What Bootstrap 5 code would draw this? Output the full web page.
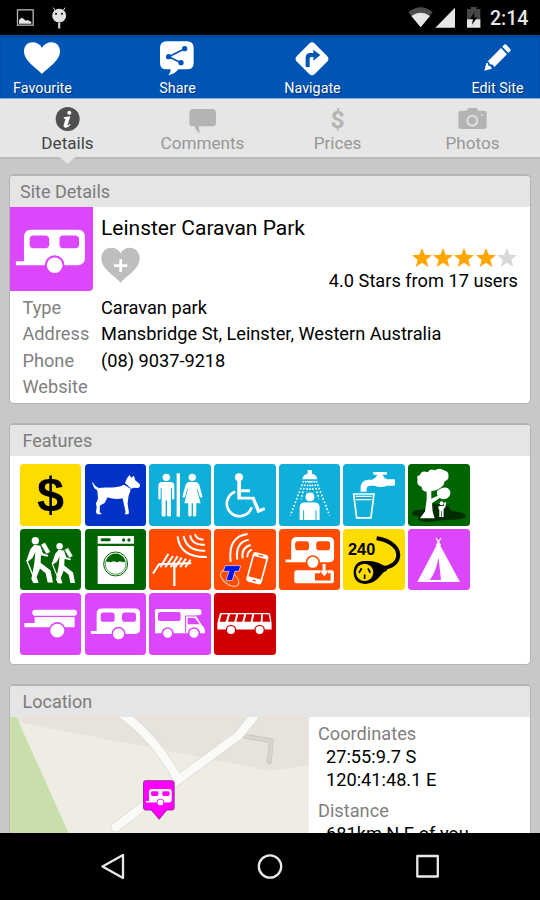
<!DOCTYPE html>
<html lang="en">
<head>
<meta charset="utf-8">
<meta name="viewport" content="width=device-width, initial-scale=1">
<title>Leinster Caravan Park</title>
<link href="https://cdn.jsdelivr.net/npm/bootstrap@5.3.0/dist/css/bootstrap.min.css" rel="stylesheet">
<style>
  body { font-family: Roboto, "Liberation Sans", sans-serif; font-size: 18.2px; line-height: 26.6px; color: #000; background: #c8c8c8; }
  svg { display: block; overflow: visible; flex: none; }
  .app-screen { width: 540px; height: 900px; }
  .status-bar { height: 35px; background: #000; }
  .clock-text { width: 55px; padding-left: 5px; font-size: 19.5px; font-weight: 500; line-height: 37px; color: #e6e6e6; }
  .action-bar { height: 64px; background: #0054b4; color: #fff; gap: 50px; border-bottom: 1px solid #8ca6d8; box-shadow: inset 0 2px 2px #00479c; }
  .action-item { width: 85px; font-size: 14.3px; line-height: 20px; text-shadow: 1px 1px 1px #00337a; }
  .tab-strip { height: 60px; background: #e6e6e6; border-bottom: 2px solid #b9b9b9; }
  .tab-item { color: #979797; font-size: 17.1px; line-height: 23px; position: relative; }
  .tab-item > svg:first-child { margin-top: -1px; }
  .tab-item.is-current { color: #444; }
  .tab-pointer { position: absolute; left: 59px; top: 58px; }
  .content-area { padding: 15px 9px 0; overflow: hidden; }
  .panel { background: #fff; border-radius: 5px; border: 1px solid #b4b4b4; border-top: 2px solid #b4b4b4; overflow: hidden; margin-bottom: 19px; }
  .panel-head { background: #e5e5e5; color: #7c7c7c; height: 31px; line-height: 31px; font-size: 18px; }
  .head-a { padding-left: 10px; }
  .head-b { padding-left: 12.5px; }
  .site-icon { width: 83px; height: 84px; background: #dc46fc; color: #dc46fc; border-bottom-right-radius: 4px; }
  .site-name { font-size: 21px; line-height: 26px; }
  .muted-label { color: #808080; }
  .label-col { width: 78.5px; }
  .star-row { color: #ffa500; padding-top: 7px; margin-bottom: 1px; }
  .field-list { padding-bottom: 2px; }
  .feature-grid { display: grid; grid-template-columns: repeat(7, 61.6px); gap: 3.15px; padding: 8px 9.8px 8.5px; }
  .tile { width: 61.6px; height: 61.6px; border-radius: 3.5px; overflow: hidden; }
  .t-yellow { background: #ffdc00; color: #ffdc00; }
  .t-blue { background: #0032c8; color: #0032c8; }
  .t-cyan { background: #0fafd9; color: #0fafd9; }
  .t-green { background: #006400; color: #006400; }
  .t-orange { background: #ff4c00; color: #ff4c00; }
  .t-pink { background: #dc46fc; color: #dc46fc; }
  .t-red { background: #d00000; color: #d00000; }
  .coords { line-height: 23.2px; padding: 5px 0 0 9px; }
  .map-view { overflow: hidden; }
  .nav-keys { height: 67px; background: #000; }
</style>
<script src="https://cdn.jsdelivr.net/npm/bootstrap@5.3.0/dist/js/bootstrap.bundle.min.js"></script>
</head>
<body>
<svg width="0" height="0" class="position-absolute" aria-hidden="true">
  <symbol id="caravan" viewBox="48 190 209 132">
    <path fill="#fff" d="M48 286H73V214Q73 190 97 190H233Q257 190 257 214V274Q257 298 233 298H48Z"/>
    <rect x="90" y="208" width="59" height="39" rx="12" fill="currentColor"/>
    <rect x="180" y="208" width="59" height="39" rx="12" fill="currentColor"/>
    <circle cx="165.500" cy="298" r="30" fill="currentColor"/>
    <circle cx="165.500" cy="298" r="23.500" fill="#fff"/>
  </symbol>
  <symbol id="star" viewBox="0 0 60 57"><path d="M30 0L38 20L60 21.500L43 35L49 57L30 44.500L11 57L17 35L0 21.500L22 20Z" fill="currentColor"/></symbol>
</svg>

<div class="app-screen d-flex flex-column overflow-hidden">
  <div class="status-bar d-flex flex-shrink-0 justify-content-between">
    <svg width="80" height="35" viewBox="0 0 240 105">
      <rect x="52.500" y="29.500" width="47" height="46" fill="none" stroke="#b4b4b4" stroke-width="4"/>
      <path d="M57 71V60L64 53L71 56L77 62L83 60L94 66V71Z" fill="#e6e6e6"/>
      <circle cx="177.500" cy="47" r="21" fill="#e1e1e1"/>
      <path d="M165 31L160 23M190 31L195 23" stroke="#e1e1e1" stroke-width="3"/>
      <circle cx="168" cy="41" r="3"/><circle cx="186" cy="41" r="3"/>
      <path d="M174 67H181V86H174Z" fill="#e1e1e1" stroke="#000"/>
    </svg>
    <div class="d-flex">
      <svg width="80" height="35" viewBox="405 0 240 105">
        <path d="M415 36Q452 8 488 36L452 82Z" fill="#4c4c4c"/>
        <path d="M424 48Q452 28 480 48L452 82Z" fill="#e6e6e6"/>
        <path d="M496 83L555 23V83Z" fill="#e6e6e6"/>
        <path d="M591 27H602V21H620V27H631V83H591Z" fill="#464646"/>
        <path d="M591 58H631V83H591Z" fill="#e6e6e6"/>
        <path d="M614 35L600 57H609L606 74L622 52H612Z" fill="#000"/>
      </svg>
      <div class="clock-text">2:14</div>
    </div>
  </div>

  <div class="action-bar d-flex flex-shrink-0">
    <div class="action-item text-center">
      <svg width="85" height="43" viewBox="0 105 255 129"><path fill="#fff" d="M126 222C113 207 72 184 72 154C72 121 112 118 126 143C140 118 180 121 180 154C180 184 139 207 126 222Z"/></svg>
      <div>Favourite</div>
    </div>
    <div class="action-item text-center">
      <svg width="85" height="43" viewBox="405 105 255 129">
        <path fill="#fff" d="M500 124H561Q581 124 581 144V188Q581 208 561 208H535Q526 221 505 226Q513 217 512 208H500Q480 208 480 188V144Q480 124 500 124Z"/>
        <path d="M554 146L506 170L543 188" fill="none" stroke="#0054b4" stroke-width="5"/>
        <g fill="#0054b4"><circle cx="554" cy="146" r="8"/><circle cx="506" cy="170" r="8"/><circle cx="543" cy="188" r="8"/></g>
      </svg>
      <div>Share</div>
    </div>
    <div class="action-item text-center">
      <svg width="85" height="43" viewBox="0 105 255 129">
        <rect x="88" y="138.500" width="76" height="76" rx="12" fill="#fff" transform="rotate(45 126 176.500)"/>
        <path d="M107 201V173Q107 159 121 159H130V149L151 165L130 182V171H123Q119 171 119 176V201Z" fill="#0054b4"/>
      </svg>
      <div>Navigate</div>
    </div>
    <div class="action-item text-center ms-auto">
      <svg width="85" height="43" viewBox="555 105 255 129">
        <path fill="#fff" d="M702 134Q706 131 710 135L720 146Q724 150 720 154L715 159L697 140ZM693 144L711 163L673 201L668 194L660 193L657 186L652 185ZM649 189L643 212L666 206L661 198L655 197L654 190Z"/>
      </svg>
      <div>Edit Site</div>
    </div>
  </div>

  <div class="tab-strip row g-0 flex-shrink-0 text-center">
    <div class="col-3 tab-item is-current">
      <svg width="135" height="34" viewBox="0 294 405 102">
        <circle cx="203" cy="357" r="36" fill="#505050"/>
        <circle cx="208" cy="338" r="6" fill="#fff"/>
        <path d="M192 352L211 349L202 377Q204 378 209 372L212 374Q204 384 195 383Q189 381 191 374L197 356H191Z" fill="#fff"/>
      </svg>
      <div>Details</div>
      <svg class="tab-pointer" width="17" height="9" viewBox="0 0 17 9"><path d="M0 0L8.500 8L17 0" fill="#e6e6e6"/><path d="M1 0.500L8.500 8L16 0.500" stroke="#b4b4b4" fill="none" stroke-width=".8"/></svg>
    </div>
    <div class="col-3 tab-item">
      <svg width="135" height="34" viewBox="405 294 405 102"><path fill="#b4b4b4" d="M579 327H637Q648 327 648 338V368Q648 379 637 379H597Q595 392 601 400Q586 393 584 379H579Q568 379 568 368V338Q568 327 579 327Z"/></svg>
      <div>Comments</div>
    </div>
    <div class="col-3 tab-item">
      <svg width="135" height="34" viewBox="0 294 405 102"><text x="203" y="385" text-anchor="middle" font-family="Roboto, sans-serif" font-weight="700" font-size="74" fill="#b4b4b4">$</text></svg>
      <div>Prices</div>
    </div>
    <div class="col-3 tab-item">
      <svg width="135" height="34" viewBox="405 294 405 102">
        <path fill="#b4b4b4" d="M573 332H590L595 324H620L625 332H642Q650 332 650 340V378Q650 387 642 387H573Q565 387 565 378V340Q565 332 573 332Z"/>
        <circle cx="607" cy="362" r="15" fill="none" stroke="#e6e6e6" stroke-width="5"/><circle cx="636" cy="345" r="3" fill="#e6e6e6"/>
      </svg>
      <div>Photos</div>
    </div>
  </div>

  <div class="content-area flex-fill">
    <section class="panel">
      <div class="panel-head head-a">Site Details</div>
      <div class="d-flex">
        <div class="site-icon"><svg width="82" height="84" viewBox="31 123 247 252"><use href="#caravan" x="48" y="190" width="209" height="132"/></svg></div>
        <div class="flex-grow-1 ps-2 pt-2 pe-2">
          <div class="site-name">Leinster Caravan Park</div>
          <div class="d-flex justify-content-between">
            <svg class="mt-1" width="40" height="40" viewBox="304 238 120 120">
              <path fill="#bebebe" d="M363 352C348 331 305 312 305 278C305 243 348 236 363 263C378 236 420 243 420 278C420 312 378 331 363 352Z"/>
              <path d="M363 281V319M343 300H383" stroke="#fff" stroke-width="8"/>
            </svg>
            <div class="text-end me-1">
              <div class="star-row d-flex justify-content-end">
                <svg width="21.300" height="19"><use href="#star" width="20" height="19"/></svg>
                <svg width="21.300" height="19"><use href="#star" width="20" height="19"/></svg>
                <svg width="21.300" height="19"><use href="#star" width="20" height="19"/></svg>
                <svg width="21.300" height="19"><use href="#star" width="20" height="19"/></svg>
                <svg width="21" height="19" color="#d9d9d9"><use href="#star" width="20" height="19"/></svg>
              </div>
              <div>4.0 Stars from 17 users</div>
            </div>
          </div>
        </div>
      </div>
      <div class="head-b field-list">
        <div class="d-flex"><div class="label-col muted-label">Type</div><div>Caravan park</div></div>
        <div class="d-flex"><div class="label-col muted-label">Address</div><div>Mansbridge St, Leinster, Western Australia</div></div>
        <div class="d-flex"><div class="label-col muted-label">Phone</div><div>(08) 9037-9218</div></div>
        <div class="d-flex"><div class="label-col muted-label">Website</div></div>
      </div>
    </section>

    <section class="panel">
      <div class="panel-head head-b">Features</div>
      <div class="feature-grid">
        <svg class="tile t-yellow" viewBox="30 25 185 185"><text x="122" y="167" text-anchor="middle" font-family="Liberation Sans, sans-serif" font-weight="700" font-size="146" fill="#000">$</text></svg>
        <svg class="tile t-blue" viewBox="224 25 185 185">
          <path fill="#fff" d="M245 79C252 83 253 94 267 97C289 92 321 100 341 87L361 99C361 109 355 117 354 126L352 144L356 171L354 176H343L346 170L342 151L337 128C322 132 303 129 292 125L283 142L269 150L268 169L275 176H261L257 170L259 154L257 144L263 129C262 116 262 107 260 103C249 98 248 87 245 79Z"/>
          <path fill="#fff" d="M344 82L350 68L358 58L363 66L371 60L375 74L389 86V93L383 97L371 96L363 99Z"/>
        </svg>
        <svg class="tile t-cyan" viewBox="12 25 185 185"><g fill="#fff">
          <circle cx="64" cy="65" r="11"/>
          <path d="M51 79H76Q88 79 88 91V128Q88 132 84 132Q81 132 81 128V98H78V178Q78 183 72 183Q66 183 66 178V135H62V178Q62 183 56 183Q50 183 50 178V98H47V128Q47 132 44 132Q40 132 40 128V91Q40 79 51 79Z"/>
          <rect x="95" y="53" width="10" height="130"/>
          <circle cx="142" cy="65" r="11"/>
          <path d="M133 79H151Q161 79 164 91L172 120Q173 125 169 126Q165 126 164 122L157 99H155L167 143H154V178Q154 183 149 183Q144 183 144 178V143H140V178Q140 183 135 183Q130 183 130 178V143H118L129 99H127L121 122Q120 126 116 126Q112 125 113 120L121 91Q124 79 133 79Z"/>
        </g></svg>
        <svg class="tile t-cyan" viewBox="207 25 185 185">
          <circle cx="282" cy="65" r="12" fill="#fff"/>
          <path d="M277 74H288V101H315V110H288V123H328L344 160L358 155L361 163L338 173L321 132H277Z" fill="#fff"/>
          <path d="M271 108A38 38 0 1 0 320 155" fill="none" stroke="#fff" stroke-width="8"/>
        </svg>
        <svg class="tile t-cyan" viewBox="11 25 185 185">
          <path d="M97 43H110V54Q125 58 126 71H81Q82 58 97 54Z" fill="#fff"/>
          <g stroke="#fff" stroke-width="5" stroke-dasharray="5 6" fill="none"><path d="M85 76L45 180M123 76L163 180M92 76L77 131M116 76L131 131M99 76L94 110M109 76L114 110M104 76V108"/></g>
          <circle cx="104" cy="124" r="15" fill="#fff" stroke="currentColor" stroke-width="3"/>
          <path d="M73 193V156Q73 141 88 141H118Q133 141 133 156V193Z" fill="#fff"/>
          <path d="M85 164V193M122 164V193" stroke="currentColor" stroke-width="3"/>
        </svg>
        <svg class="tile t-cyan" viewBox="205 25 185 185">
          <path d="M258 108V96Q258 75 280 72H292L302 66L308 57H296V49H337V57H324L329 66L338 71H361V90H338Q318 98 300 90H286Q277 91 276 98V108Z" fill="#fff"/>
          <path d="M237 115H298L289 187H246Z" fill="none" stroke="#fff" stroke-width="5"/>
          <path d="M243 122H291M244 132H290" stroke="#fff" stroke-width="4"/>
        </svg>
        <svg class="tile t-green" viewBox="24 25 185 185">
          <path fill="#002d00" d="M36 172Q44 160 62 164L104 144L144 150L154 166Q190 168 198 180Q194 191 168 192L120 195Q80 204 54 193L56 182Q38 182 36 172Z"/>
          <path fill="#fff" d="M60 188L75 168L80 132V108Q65 107 65 93Q48 88 53 72Q48 58 60 59Q64 43 83 50Q90 37 104 44Q119 34 132 44Q149 49 145 63Q148 70 134 77Q132 92 119 98Q106 108 94 106V129L113 120Q106 104 121 99Q141 91 149 103Q156 118 142 128Q127 135 120 126L96 143L98 168L104 188Z"/>
          <circle cx="125" cy="143" r="6" fill="#fff"/><path d="M116 151H131L134 139L139 141L136 155L131 160V184H125V166H123V184H118V162L115 160Z" fill="#fff"/>
        </svg>

        <svg class="tile t-green" viewBox="30 219 185 185">
          <g id="hiker"><circle cx="76" cy="254" r="11" fill="#fff"/>
          <path d="M73 266L91 269L99 292L115 297L113 302L93 298L92 320L122 344L129 380H113L107 352L90 338L80 363L86 381H70L64 369L73 322L76 289L67 307L53 317L50 312L61 280Z" fill="#fff"/>
          <path d="M92 266L105 259L122 288L109 295Z" fill="#fff" stroke="currentColor" stroke-width="2"/>
          <path d="M50 312L78 381" stroke="#fff" stroke-width="4"/></g>
          <g transform="translate(82 47) scale(.88)"><use href="#hiker"/></g>
        </svg>
        <svg class="tile t-green" viewBox="224 219 185 185">
          <path d="M262 240H371V263H262ZM262 270H371V384H262Z" fill="#fff"/>
          <rect x="271" y="247" width="30" height="9" rx="4" fill="currentColor"/>
          <circle cx="340" cy="252" r="5" fill="currentColor"/><circle cx="356" cy="252" r="5" fill="currentColor"/>
          <circle cx="316" cy="324" r="36" fill="none" stroke="currentColor" stroke-width="3"/>
          <path d="M286 316A31 31 0 0 1 346 316L338 319L329 316L320 319L310 316L300 319Z" fill="currentColor"/>
          <path d="M286 316A31 31 0 1 0 346 316" fill="none" stroke="currentColor" stroke-width="2"/>
        </svg>
        <svg class="tile t-orange" viewBox="12 219 185 185"><g fill="none" stroke="#fff" stroke-width="6">
          <path d="M98 241Q105 305 186 303M116 240Q125 286 181 284M135 238Q142 270 180 266M150 235Q155 251 176 251"/>
          <path d="M24 353L42 325L139 322" /><path d="M88 323V390" stroke-width="7"/><path d="M46 334L70 293M61 334L84 300M77 334L98 301M91 334L110 305M106 334L123 308M121 334L137 311"/>
        </g></svg>
        <svg class="tile t-orange" viewBox="207 219 185 185">
          <g fill="none" stroke="#fff" stroke-width="6"><path d="M257 317Q248 242 308 234M277 311Q270 259 311 251M293 307Q288 275 317 267M307 304Q307 286 321 281"/></g>
          <g transform="rotate(15 337 337)"><rect x="313" y="291" width="48" height="92" rx="9" fill="#fff"/><rect x="318" y="304" width="38" height="63" fill="currentColor"/><path d="M330 298H345M333 375H342" stroke="currentColor" stroke-width="4"/></g>
          <ellipse cx="254" cy="367" rx="32" ry="18" transform="rotate(38 254 367)" fill="none" stroke="#ffc9a8" stroke-width="3"/>
          <path d="M241 329H287L282 346H270L262 374H243L252 346H235Z" fill="#0014f0" stroke="#eee" stroke-width="2"/>
        </svg>
        <svg class="tile t-orange" viewBox="11 219 185 185">
          <use href="#caravan" x="30" y="243" width="147" height="93"/>
          <rect x="57" y="343" width="119" height="39" rx="7" fill="#fff"/>
          <path d="M119 352H166V374H119Z" fill="currentColor"/>
          <path d="M135 340H158V353H135Z" fill="currentColor"/>
          <path d="M142 324H151V344H160L147 362L134 344H142Z" fill="#fff"/>
        </svg>
        <svg class="tile t-yellow" viewBox="205 219 185 185">
          <text x="220" y="297" font-family="Liberation Sans, sans-serif" font-weight="700" font-size="49" textLength="82" fill="#000">240</text>
          <path d="M306 247C337 251 371 269 371 297C370 322 350 333 323 337" fill="none" stroke="#000" stroke-width="12"/>
          <path fill="#000" d="M268 315C293 315 306 316 326 328L337 333V344L326 350C310 368 300 383 271 384C249 384 237 370 237 350C237 330 248 315 268 315Z"/>
          <circle cx="270" cy="349" r="26" fill="currentColor"/><path d="M261 337L253 351M280 337L287 351M270 356V369" stroke="#000" stroke-width="5"/>
        </svg>
        <svg class="tile t-pink" viewBox="24 219 185 185">
          <path d="M108 246L122 268M123 246L109 268" stroke="#fff" stroke-width="4"/>
          <path d="M115 258L180 378H52Z" fill="#fff"/><path d="M116 305L123 372H89Q106 352 116 305Z" fill="currentColor"/>
        </svg>

        <svg class="tile t-pink" viewBox="30 15 185 185">
          <rect x="67" y="65" width="134" height="18" rx="8" fill="#fff"/><path d="M74 87H194V118H43V105H74Z" fill="#fff"/>
          <circle cx="142" cy="127" r="25" fill="currentColor"/><circle cx="142" cy="128" r="21" fill="#fff"/>
        </svg>
        <svg class="tile t-pink" viewBox="224 15 185 185"><use href="#caravan" x="241" y="61" width="149" height="94"/></svg>
        <svg class="tile t-pink" viewBox="418 15 185 185">
          <path d="M441 63H567Q576 63 576 72Q576 82 567 82H558L577 112Q586 118 586 127V136H436V68Q436 63 441 63Z" fill="#fff"/>
          <rect x="445" y="72" width="68" height="27" rx="6" fill="currentColor"/>
          <path d="M528 136V84H559" fill="none" stroke="currentColor" stroke-width="3"/>
          <path d="M534 90H556L570 109H534Z" fill="currentColor"/>
          <g fill="#fff" stroke="currentColor" stroke-width="5"><circle cx="474" cy="136" r="16"/><circle cx="553" cy="136" r="16"/></g>
        </svg>
        <svg class="tile t-red" viewBox="612 15 185 185">
          <path d="M632 75H777Q780 75 781 80L785 105V125H622V107L629 78Z" fill="#fff"/>
          <g fill="currentColor"><path d="M635 79H654L647 101H629ZM660 79H679L673 101H654ZM685 79H703L697 101H679ZM709 79H727L722 101H703ZM733 79H754L752 101H728ZM759 79H776L781 101H758Z"/></g>
          <g fill="#fff" stroke="currentColor" stroke-width="4"><circle cx="663" cy="126" r="14"/><circle cx="749" cy="126" r="14"/></g>
        </svg>
      </div>
    </section>

    <section class="panel">
      <div class="panel-head head-b">Location</div>
      <div class="d-flex">
        <svg class="map-view" width="299" height="150" viewBox="31 109 896 450">
          <path fill="#efece3" d="M31 109H927V559H31Z"/>
          <path fill="#e7e3dc" d="M31 109H927V254L808 270L520 213L60 126L31 120Z"/>
          <path fill="#c9dfab" d="M31 109H50L207 459L250 559H31Z"/>
          <path d="M735 167L815 180L808 243" fill="none" stroke="#cdcac0" stroke-width="15" stroke-linejoin="round" stroke-linecap="round"/>
          <path d="M735 167L815 180L808 243" fill="none" stroke="#d8d5cb" stroke-width="9"/>
          <g fill="none" stroke-linecap="round" stroke-linejoin="round">
            <path stroke="#dfdcd4" stroke-width="30" d="M347 440L535 297L716 165L780 85M535 297Q460 160 355 92"/>
            <path stroke="#fafaf8" stroke-width="25" d="M347 440L535 297L716 165L780 85M535 297Q460 160 355 92"/>
          </g>
          <path d="M437 300H517Q523 300 523 306V382Q523 388 517 388H501L478 416L454 388H437Q431 388 431 382V306Q431 300 437 300Z" fill="#f0f" stroke="#80287d" stroke-width="2.500"/>
          <g color="#ff00ff"><use href="#caravan" x="438" y="324" width="78" height="51"/></g>
        </svg>
        <div class="coords">
          <div class="muted-label">Coordinates</div>
          <div class="ps-2">27:55:9.7 S</div>
          <div class="ps-2">120:41:48.1 E</div>
          <div class="muted-label pt-2">Distance</div>
          <div class="ps-2">681km N E of you</div>
        </div>
      </div>
    </section>
  </div>

  <div class="nav-keys flex-shrink-0">
    <svg width="540" height="67" viewBox="0 1 540 67" fill="none" stroke="#e9e9e9" stroke-width="2.300" stroke-linejoin="round">
      <path d="M102.500 34.500L123 23V46Z"/><circle cx="270" cy="34.500" r="11.200"/><rect x="417.300" y="24" width="20.500" height="20.500"/>
    </svg>
  </div>
</div>
</body>
</html>
